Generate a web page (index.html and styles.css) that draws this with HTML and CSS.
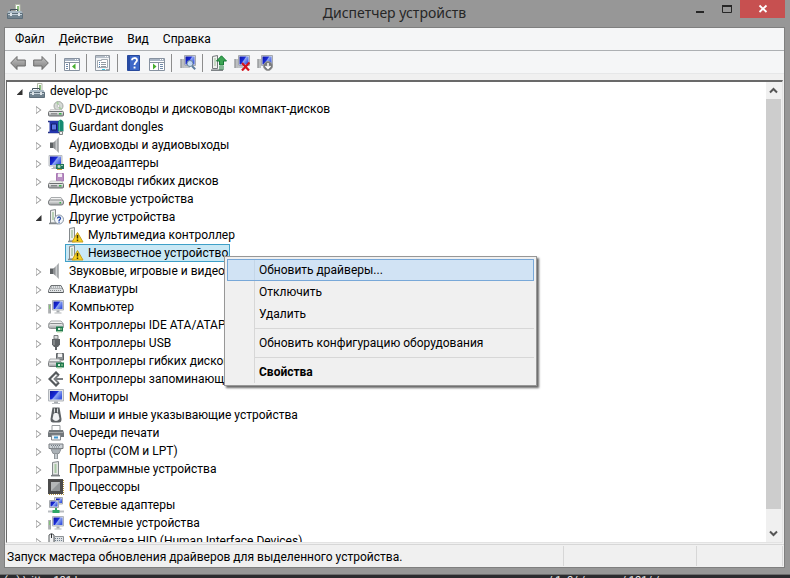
FILE: index.html
```html
<!DOCTYPE html>
<html lang="ru">
  <head>
    <meta charset="UTF-8" />
    <meta name="viewport" content="width=device-width, initial-scale=1.0" />
    <title>Диспетчер устройств</title>
    <link rel="stylesheet" href="styles.css">
  </head>
  <body>
    <!-- Набор иконок -->
    <svg class="sprite" aria-hidden="true">
      <defs>
        <linearGradient id="screen" x1="0" y1="0" x2="1" y2="0.6">
          <stop offset="0" stop-color="#0a12a0" />
          <stop offset="0.5" stop-color="#1a2bd8" />
          <stop offset="0.6" stop-color="#8fa6f2" />
          <stop offset="1" stop-color="#3c58e0" />
        </linearGradient>
        <linearGradient id="metal" x1="0" y1="0" x2="0" y2="1">
          <stop offset="0" stop-color="#f4f4f4" />
          <stop offset="1" stop-color="#9a9d9f" />
        </linearGradient>
        <linearGradient id="side" x1="0" y1="0" x2="1" y2="0">
          <stop offset="0" stop-color="#6f7275" />
          <stop offset="0.6" stop-color="#c9ccce" />
          <stop offset="1" stop-color="#808386" />
        </linearGradient>
        <linearGradient id="arrow" x1="0" y1="0" x2="0" y2="1">
          <stop offset="0" stop-color="#c4c4c4" />
          <stop offset="1" stop-color="#7e7e7e" />
        </linearGradient>
      </defs>

      <symbol id="i-back" viewBox="0 0 16 16">
        <path d="M0.7 8L7 1.5v3.5h8.3v6H7v3.5z" fill="url(#arrow)" stroke="#6b6b6b" />
      </symbol>
      <symbol id="i-forward" viewBox="0 0 16 16">
        <path d="M15.3 8L9 1.5v3.5H0.7v6H9v3.5z" fill="url(#arrow)" stroke="#6b6b6b" />
      </symbol>
      <symbol id="i-tree" viewBox="0 0 16 16">
        <path d="M0.5 3.5h15v12H0.5z" fill="#fff" stroke="#8792a0" />
        <path d="M1 4h14v2H1z" fill="#a9b5c4" />
        <path d="M11 4.5h1M13 4.5h1" stroke="#fff" />
        <path d="M0 7.5h16M5.5 8v7" stroke="#8792a0" />
        <path d="M2 9.5h2M2 11.5h2M2 13.5h2" stroke="#6d88a8" />
        <path d="M11.5 8.5v6L8 11.5z" fill="#45ad2c" />
      </symbol>
      <symbol id="i-props" viewBox="0 0 16 16">
        <path d="M0.5 0.5h14v15H0.5z" fill="#f4f6f8" stroke="#929aa3" />
        <path d="M1 1h13v2H1z" fill="#b7c0ca" />
        <path d="M10 1.5h1M12 1.5h1" stroke="#fff" />
        <path d="M2.5 5.5h4v-1h6v8h-10z" fill="#fff" stroke="#a4abb2" />
        <path d="M4 7.5h1M4 9.5h1M4 11.5h1" stroke="#4f7fb0" />
        <path d="M6 7.5h5M6 9.5h5M6 11.5h5" stroke="#939aa1" />
        <path d="M7 14.5h3" stroke="#2cc4e0" />
        <path d="M11 14.5h3" stroke="#a4abb2" />
      </symbol>
      <symbol id="i-help" viewBox="0 0 16 16">
        <path d="M1.5 0.5h12v15h-12z" fill="#3d68c8" stroke="#284a9c" />
        <path d="M2 1h2v14H2z" fill="#264ba6" />
        <path d="M6 5.2C6 2.4 11 2.2 11 5.2C11 7.2 8.5 7.3 8.5 10" fill="none" stroke="#fff" stroke-width="1.8" />
        <path d="M7.6 11.6h1.9v1.9H7.6z" fill="#fff" />
      </symbol>
      <symbol id="i-pane" viewBox="0 0 16 16">
        <path d="M0.5 3.5h15v12H0.5z" fill="#fff" stroke="#8792a0" />
        <path d="M1 4h14v2H1z" fill="#a9b5c4" />
        <path d="M11 4.5h1M13 4.5h1" stroke="#fff" />
        <path d="M0 7.5h16M9.5 8v7" stroke="#8792a0" />
        <path d="M11 9.5h3M11 11.5h3M11 13.5h3" stroke="#6d88a8" />
        <path d="M4 8.5v6L7.5 11.5z" fill="#45ad2c" />
      </symbol>

      <!-- Компьютер с системным блоком, общий для нескольких иконок -->
      <symbol id="i-computer" viewBox="0 0 16 16">
        <path d="M4.5 1.5h11v9.5h-11z" fill="#e1e3e6" stroke="#b1b5ba" />
        <path d="M5.5 2.5h9v7.5h-9z" fill="url(#screen)" />
        <path d="M8.5 11.5h3v2h-3z" fill="#a7abaf" />
        <path d="M6.5 13.5h7v1h-7z" fill="#b3b6b9" />
        <path d="M0.5 5h2.5v9.5h-2.5z" fill="url(#side)" />
        <path d="M1 6h1v4H1z" fill="#84c07b" />
      </symbol>
      <symbol id="i-scan" viewBox="0 0 16 16">
        <path d="M4.5 0.5h11v10h-11z" fill="#dcdfe3" stroke="#a5a9ae" />
        <path d="M5.5 1.5h9v8h-9z" fill="url(#screen)" />
        <path d="M0.5 4h3v9h-3z" fill="url(#side)" />
        <path d="M4 11h6v2H4z" fill="#c0c3c7" />
        <circle cx="10" cy="8.5" r="3" fill="#cfe6f8" fill-opacity="0.85" stroke="#68849c" />
        <path d="M12 11l3.2 3.2" stroke="#5f7f9e" stroke-width="2" />
      </symbol>
      <symbol id="i-update" viewBox="0 0 16 16">
        <path d="M1.5 1.5l5-1v13h-5z" fill="#eef0ee" stroke="#74797c" />
        <path d="M3 3h2v8H3z" fill="#c5d8c3" />
        <path d="M0 15.2h12" stroke="#7e8386" stroke-width="1.6" />
        <path d="M10.5 0.8L15.5 6h-3v4h-4V6H5.5z" fill="#3ba553" stroke="#167a35" />
        <path d="M8 12h5M8 14h5" stroke="#167a35" />
      </symbol>
      <symbol id="i-remove" viewBox="0 0 16 16">
        <path d="M4.5 0.5h11v10h-11z" fill="#dcdfe3" stroke="#a5a9ae" />
        <path d="M5.5 1.5h9v8h-9z" fill="url(#screen)" />
        <path d="M0.5 4h3v9h-3z" fill="url(#side)" />
        <path d="M4 11h5v2H4z" fill="#c0c3c7" />
        <path d="M8 8l7 7.5M15.5 7.5l-7.5 8" stroke="#d3141c" stroke-width="2.2" />
      </symbol>
      <symbol id="i-disable" viewBox="0 0 16 16">
        <path d="M4.5 0.5h11v10h-11z" fill="#dcdfe3" stroke="#a5a9ae" />
        <path d="M5.5 1.5h9v8h-9z" fill="url(#screen)" />
        <path d="M0.5 4h3v9h-3z" fill="url(#side)" />
        <circle cx="11" cy="11" r="4.5" fill="#77797b" stroke="#999" />
        <path d="M11 8v5M8.5 11l2.5 2.5 2.5-2.5" fill="none" stroke="#fff" stroke-width="1.5" />
      </symbol>

      <symbol id="i-root" viewBox="0 0 16 16">
        <path d="M8.5 0.5h4.5v7H8.5z" fill="#fff" stroke="#b2b8a8" />
        <path d="M10 2h2v5h-2z" fill="#8bbf7c" />
        <path d="M3.5 8V5.5h7V8" fill="none" stroke="#44525c" />
        <path d="M1.5 7h13l1.5 3H0z" fill="#a9b9c4" />
        <path d="M0.5 9.5h15v5h-15z" fill="#71838f" stroke="#5d6e7a" />
        <path d="M1 10.5h14" stroke="#c2cfd8" />
        <path d="M3 9h2v3H3zM11 9h2v3h-2z" fill="#dce3e7" />
      </symbol>
      <symbol id="i-dvd" viewBox="0 0 16 16">
        <circle cx="10.5" cy="5" r="4.5" fill="#d6dad6" stroke="#a2a6a2" />
        <path d="M10.5 5L8 1.5 10.5 0.8zM10.5 5l3.5 2.5-2.5 1.8z" fill="#a6cf9e" />
        <circle cx="10.5" cy="5" r="1.3" fill="#fff" stroke="#999" stroke-width="0.5" />
        <path d="M2.5 8.5h11l2 3H0.5z" fill="#ececec" stroke="#aaa" stroke-width="0.5" />
        <rect x="0.5" y="10.5" width="15" height="4.5" rx="1" fill="url(#metal)" stroke="#6c6f71" />
        <path d="M11 12h2.5v1.5H11z" fill="#39b54a" />
        <path d="M3 12.8h6" stroke="#77797b" />
      </symbol>
      <symbol id="i-dongle" viewBox="0 0 16 16">
        <path d="M0 2.5h11M0 13.5h11" stroke="#25307e" stroke-width="1.5" />
        <path d="M1.5 2h9v12h-9z" fill="#2436ad" />
        <path d="M3.5 5h5v6h-5z" fill="#5e78e4" stroke="#121c66" />
        <path d="M10 3q2.5-5 5.5 0v9.5H10z" fill="#168a72" />
        <path d="M11.5 2v10" stroke="#49b89e" />
        <path d="M11.5 12.5h3v3h-3z" fill="#eee" stroke="#818585" />
      </symbol>
      <symbol id="i-audio" viewBox="0 0 16 16">
        <path d="M2 5.5h3.5v5.5H2z" fill="#5d6164" />
        <path d="M5.5 5.5L10.5 0.5v15L5.5 11z" fill="url(#side)" />
        <path d="M10.5 0.5v15" stroke="#b3b6b8" />
      </symbol>
      <symbol id="i-video" viewBox="0 0 16 16">
        <path d="M1 0.5h13v10.5H1z" fill="#e1e3e6" stroke="#b7bbc0" />
        <path d="M2 1.5h11v8.5H2z" fill="url(#screen)" />
        <path d="M5 11.5h4v1.5H5zM3.5 13h5v1h-5z" fill="#b2b6ba" />
        <path d="M8 9h8v5H8z" fill="#20745a" />
        <path d="M10 10.5h2v2h-2zM13 10.5h2" fill="#ddebd9" stroke="#9fcfaf" />
        <path d="M9 14.5h5" stroke="#c8a33c" />
      </symbol>
      <symbol id="i-floppy" viewBox="0 0 16 16">
        <path d="M8.5 0.5h7V8h-7z" fill="#b98fc4" stroke="#a978b4" />
        <path d="M10 0.5h4V4h-4z" fill="#f3edf5" />
        <path d="M2.5 8h11l2 3H0.5z" fill="#ececec" stroke="#aaa" stroke-width="0.5" />
        <rect x="0.5" y="10.5" width="15" height="4.5" rx="1" fill="url(#metal)" stroke="#6c6f71" />
        <path d="M11 12h2.5v1.5H11z" fill="#39b54a" />
        <path d="M3 12.8h6" stroke="#66696b" />
      </symbol>
      <symbol id="i-disk" viewBox="0 0 16 16">
        <path d="M3 6.5h10l2.5 4H0.5z" fill="#f3f3f3" stroke="#a8abad" />
        <rect x="0.5" y="9" width="15" height="5" rx="2" fill="url(#metal)" stroke="#7b7e80" />
        <path d="M11.5 11h1.5v1.5h-1.5z" fill="#39b54a" />
      </symbol>
      <symbol id="i-other" viewBox="0 0 16 16">
        <path d="M2.5 1.5l5-1V14h-5z" fill="#eef0ee" stroke="#84898c" />
        <path d="M4 3h2v8H4z" fill="#b9d1b5" />
        <path d="M1 14.5h9" stroke="#84898c" stroke-width="1.5" />
        <circle cx="11" cy="10.5" r="4.5" fill="#f4f7fb" stroke="#8794a3" />
        <path d="M9.5 9.5c0-2 3-2 3 0C12.5 10.5 11 10.7 11 12" fill="none" stroke="#2449a8" stroke-width="1.3" />
        <path d="M10.4 12.5h1.3v1.3h-1.3z" fill="#2449a8" />
      </symbol>
      <symbol id="i-unknown" viewBox="0 0 16 16">
        <path d="M1.5 1.5l5-1V14h-5z" fill="#eef0ee" stroke="#84898c" />
        <path d="M3 3h2v8H3z" fill="#b9d1b5" />
        <path d="M0 14.5h7" stroke="#84898c" stroke-width="1.5" />
        <path d="M9.5 5.5L15 15H4z" fill="#f7d21e" stroke="#c59e1c" stroke-linejoin="round" />
        <path d="M9.5 8v3.5M9.5 12.5v1.5" stroke="#3b3000" stroke-width="1.5" />
      </symbol>
      <symbol id="i-keyboard" viewBox="0 0 16 16">
        <path d="M3 4.5h10l2.5 5v2h-15v-2z" fill="#dfe2e4" stroke="#6f7376" stroke-linejoin="round" />
        <path d="M3 6h10M2.5 7.5h11M2 9.5h12" stroke="#85898c" stroke-dasharray="1 1" />
        <path d="M1 11.5h14" stroke="#54585b" />
      </symbol>
      <symbol id="i-ide" viewBox="0 0 16 16">
        <path d="M3 4h10l2.5 3H0.5z" fill="#f3f3f3" stroke="#a8abad" />
        <rect x="0.5" y="6.5" width="15" height="5" rx="2" fill="url(#metal)" stroke="#8b8e90" />
        <path d="M8 9.5h7v5H8z" fill="#1f7a4d" />
        <path d="M10 11h2v2h-2z" fill="#d9efdf" />
        <path d="M13 11v2M9 15h5" stroke="#b7d7a8" />
      </symbol>
      <symbol id="i-usb" viewBox="0 0 16 16">
        <path d="M6 0.5h4V4H6z" fill="#d9dbdc" stroke="#7b7e80" />
        <path d="M4 4h8v5.5L10 12H6L4 9.5z" fill="#606467" />
        <path d="M6 5v5" stroke="#a7abad" />
        <path d="M8 12v3" stroke="#606467" stroke-width="2" />
      </symbol>
      <symbol id="i-fdc" viewBox="0 0 16 16">
        <path d="M8.5 0.5h7V7h-7z" fill="#8e9295" stroke="#606467" />
        <path d="M10 0.5h4V4h-4z" fill="#f4f4f4" />
        <path d="M2 6h9l2 3H0.5z" fill="#f0f0f0" stroke="#a8abad" />
        <rect x="0.5" y="9" width="13" height="4.5" rx="1" fill="url(#metal)" stroke="#7b7e80" />
        <path d="M8 9.5h8v5H8z" fill="#1f7a4d" />
        <path d="M10 11h2v2h-2z" fill="#d9efdf" />
        <path d="M14 11v2M9 15h5" stroke="#b7d7a8" />
      </symbol>
      <symbol id="i-storage" viewBox="0 0 16 16">
        <path d="M11 4.5L8 1.5 1.5 8 8 14.5l3-3" fill="none" stroke="#55595c" stroke-width="2.2" />
        <path d="M6.5 8H15M10 4.5L6.5 8l3.5 3.5" fill="none" stroke="#7c8083" stroke-width="1.8" />
      </symbol>
      <symbol id="i-monitor" viewBox="0 0 16 16">
        <path d="M0.5 0.5h15v11.5h-15z" fill="#e1e3e6" stroke="#b1b5ba" />
        <path d="M2 2h12v8.5H2z" fill="url(#screen)" />
        <path d="M6 12.5h4v1.5H6z" fill="#a7abaf" />
        <path d="M4 14.5h8" stroke="#bcc0c4" />
      </symbol>
      <symbol id="i-mouse" viewBox="0 0 16 16">
        <path d="M4.5 0.5h7L13.5 12Q13.5 15.5 11 15.5H5Q2.5 15.5 2.5 12z" fill="#5d6164" />
        <path d="M5.5 7Q8 4 10.5 7L11.5 12Q8 16 4.5 12z" fill="#f1f2f3" />
        <path d="M6 1.5h4v4H6z" fill="#d7dadc" />
        <path d="M8 1v5" stroke="#2c2f31" stroke-width="1.5" />
      </symbol>
      <symbol id="i-printer" viewBox="0 0 16 16">
        <path d="M4 0.5h8V6H4z" fill="#fff" stroke="#989c9f" />
        <path d="M1 5h14l1 3v4H0V8z" fill="#72777b" />
        <path d="M1 7.5h14" stroke="#a5a8aa" />
        <path d="M3.5 10h9v5h-9z" fill="#f5f8fb" stroke="#85898c" />
        <path d="M6 12.5h4" stroke="#3f96cf" stroke-width="2" />
      </symbol>
      <symbol id="i-port" viewBox="0 0 16 16">
        <path d="M1 1h14v4.5H1z" fill="#cdd2d6" stroke="#787d81" />
        <path d="M3 2.5h10M4 4h8" stroke="#737c84" stroke-dasharray="1 1" />
        <path d="M3 6h10l-2 4.5H5z" fill="#aab1b6" stroke="#8b9094" />
        <path d="M6.5 10.5h3V16h-3z" fill="#c8cdd1" stroke="#90969a" />
      </symbol>
      <symbol id="i-soft" viewBox="0 0 16 16">
        <path d="M4.5 1.5l6-1V14h-6z" fill="#e3e6e3" stroke="#84898c" />
        <path d="M6.5 3h2v9h-2z" fill="#a9c9a5" />
        <path d="M3 14.7h9" stroke="#7b8083" stroke-width="1.5" />
      </symbol>
      <symbol id="i-cpu" viewBox="0 0 16 16">
        <path d="M1 15.5h15M15.5 1v15" stroke="#b39545" stroke-dasharray="1 1" />
        <path d="M0 0h15v15H0z" fill="#4b4b4b" />
        <path d="M3 3h9v9H3z" fill="#b4b7b8" />
        <path d="M3 12l9-9v9z" fill="#929698" />
      </symbol>
      <symbol id="i-net" viewBox="0 0 16 16">
        <path d="M6.5 0.5h8v6.5h-8z" fill="#dcdfe3" stroke="#a5a9ae" />
        <path d="M8 1.5h6v4.5H8z" fill="url(#screen)" />
        <path d="M1.5 3.5h9v7h-9z" fill="#dcdfe3" stroke="#a5a9ae" />
        <path d="M2.5 4.5h7v5h-7z" fill="url(#screen)" />
        <path d="M7 11h2v3H7z" fill="#3aa66c" />
        <path d="M0 14.5h16" stroke="#b8bcc0" stroke-width="2" />
        <path d="M4.5 14.5h7" stroke="#2fa866" stroke-width="3" />
      </symbol>
      <symbol id="i-hid" viewBox="0 0 16 16">
        <path d="M1 2q2.5-3 5 0v9q-2.5 3-5 0z" fill="#f1f2f3" stroke="#54585b" />
        <path d="M3.5 1v4" stroke="#2c2f31" />
        <path d="M6.5 3.5h9v9h-9z" fill="#dfe2e4" stroke="#8d9194" />
        <path d="M7 5.5h8M7 7.5h8" stroke="#717f8d" stroke-dasharray="1 1" />
      </symbol>
    </svg>

    <div class="window">
      <header class="titlebar">
        <svg class="icon"><use href="#i-root" /></svg>
        <h1 class="title">Диспетчер устройств</h1>
        <div class="controls">
          <button class="control" aria-label="Свернуть">
            <svg width="10" height="10"><path d="M1 8h8" stroke="#262626" stroke-width="2" /></svg>
          </button>
          <button class="control" aria-label="Развернуть">
            <svg width="10" height="10"><path d="M0.5 1v7.5h9V1" fill="none" stroke="#262626" /><path d="M0 2h10" stroke="#262626" stroke-width="2" /></svg>
          </button>
          <button class="control close" aria-label="Закрыть">
            <svg width="10" height="10"><path d="M1.5 1.5l7 6.5M8.5 1.5l-7 6.5" stroke="#fff" stroke-width="1.8" /></svg>
          </button>
        </div>
      </header>

      <main class="client">
        <nav class="menubar">
          <button class="menu">Файл</button>
          <button class="menu">Действие</button>
          <button class="menu">Вид</button>
          <button class="menu">Справка</button>
        </nav>

        <div class="toolbar">
          <button class="tool" aria-label="Назад"><svg class="icon"><use href="#i-back" /></svg></button>
          <button class="tool" aria-label="Вперёд"><svg class="icon"><use href="#i-forward" /></svg></button>
          <span class="divider"></span>
          <button class="tool" aria-label="Дерево консоли"><svg class="icon"><use href="#i-tree" /></svg></button>
          <span class="divider"></span>
          <button class="tool" aria-label="Свойства"><svg class="icon"><use href="#i-props" /></svg></button>
          <span class="divider"></span>
          <button class="tool" aria-label="Справка"><svg class="icon"><use href="#i-help" /></svg></button>
          <button class="tool" aria-label="Панель действий"><svg class="icon"><use href="#i-pane" /></svg></button>
          <span class="divider"></span>
          <button class="tool" aria-label="Обновить конфигурацию"><svg class="icon"><use href="#i-scan" /></svg></button>
          <span class="divider"></span>
          <button class="tool" aria-label="Обновить драйверы"><svg class="icon"><use href="#i-update" /></svg></button>
          <button class="tool" aria-label="Удалить"><svg class="icon"><use href="#i-remove" /></svg></button>
          <button class="tool" aria-label="Отключить"><svg class="icon"><use href="#i-disable" /></svg></button>
        </div>

        <div class="view">
          <ul class="tree">
            <li>
              <div class="row"><button class="twisty open" aria-label="Свернуть"></button><svg class="icon"><use href="#i-root" /></svg><span class="name">develop-pc</span></div>
              <ul class="branch">
                <li class="row"><button class="twisty" aria-label="Развернуть"></button><svg class="icon"><use href="#i-dvd" /></svg><span class="name">DVD-дисководы и дисководы компакт-дисков</span></li>
                <li class="row"><button class="twisty" aria-label="Развернуть"></button><svg class="icon"><use href="#i-dongle" /></svg><span class="name">Guardant dongles</span></li>
                <li class="row"><button class="twisty" aria-label="Развернуть"></button><svg class="icon"><use href="#i-audio" /></svg><span class="name">Аудиовходы и аудиовыходы</span></li>
                <li class="row"><button class="twisty" aria-label="Развернуть"></button><svg class="icon"><use href="#i-video" /></svg><span class="name">Видеоадаптеры</span></li>
                <li class="row"><button class="twisty" aria-label="Развернуть"></button><svg class="icon"><use href="#i-floppy" /></svg><span class="name">Дисководы гибких дисков</span></li>
                <li class="row"><button class="twisty" aria-label="Развернуть"></button><svg class="icon"><use href="#i-disk" /></svg><span class="name">Дисковые устройства</span></li>
                <li>
                  <div class="row"><button class="twisty open" aria-label="Свернуть"></button><svg class="icon"><use href="#i-other" /></svg><span class="name">Другие устройства</span></div>
                  <ul class="branch devices">
                    <li class="row"><svg class="icon"><use href="#i-unknown" /></svg><span class="name">Мультимедиа контроллер</span></li>
                    <li class="row selected">
                      <svg class="icon"><use href="#i-unknown" /></svg><span class="name">Неизвестное устройство</span>
                      <!-- Контекстное меню выбранного устройства -->
                      <div class="context" role="menu">
                        <button class="command active" role="menuitem">Обновить драйверы...</button>
                        <button class="command" role="menuitem">Отключить</button>
                        <button class="command" role="menuitem">Удалить</button>
                        <hr class="line">
                        <button class="command" role="menuitem">Обновить конфигурацию оборудования</button>
                        <hr class="line">
                        <button class="command default" role="menuitem">Свойства</button>
                      </div>
                    </li>
                  </ul>
                </li>
                <li class="row"><button class="twisty" aria-label="Развернуть"></button><svg class="icon"><use href="#i-audio" /></svg><span class="name">Звуковые, игровые и видеоустройства</span></li>
                <li class="row"><button class="twisty" aria-label="Развернуть"></button><svg class="icon"><use href="#i-keyboard" /></svg><span class="name">Клавиатуры</span></li>
                <li class="row"><button class="twisty" aria-label="Развернуть"></button><svg class="icon"><use href="#i-computer" /></svg><span class="name">Компьютер</span></li>
                <li class="row"><button class="twisty" aria-label="Развернуть"></button><svg class="icon"><use href="#i-ide" /></svg><span class="name">Контроллеры IDE ATA/ATAPI</span></li>
                <li class="row"><button class="twisty" aria-label="Развернуть"></button><svg class="icon"><use href="#i-usb" /></svg><span class="name">Контроллеры USB</span></li>
                <li class="row"><button class="twisty" aria-label="Развернуть"></button><svg class="icon"><use href="#i-fdc" /></svg><span class="name">Контроллеры гибких дисков</span></li>
                <li class="row"><button class="twisty" aria-label="Развернуть"></button><svg class="icon"><use href="#i-storage" /></svg><span class="name">Контроллеры запоминающих устройств</span></li>
                <li class="row"><button class="twisty" aria-label="Развернуть"></button><svg class="icon"><use href="#i-monitor" /></svg><span class="name">Мониторы</span></li>
                <li class="row"><button class="twisty" aria-label="Развернуть"></button><svg class="icon"><use href="#i-mouse" /></svg><span class="name">Мыши и иные указывающие устройства</span></li>
                <li class="row"><button class="twisty" aria-label="Развернуть"></button><svg class="icon"><use href="#i-printer" /></svg><span class="name">Очереди печати</span></li>
                <li class="row"><button class="twisty" aria-label="Развернуть"></button><svg class="icon"><use href="#i-port" /></svg><span class="name">Порты (COM и LPT)</span></li>
                <li class="row"><button class="twisty" aria-label="Развернуть"></button><svg class="icon"><use href="#i-soft" /></svg><span class="name">Программные устройства</span></li>
                <li class="row"><button class="twisty" aria-label="Развернуть"></button><svg class="icon"><use href="#i-cpu" /></svg><span class="name">Процессоры</span></li>
                <li class="row"><button class="twisty" aria-label="Развернуть"></button><svg class="icon"><use href="#i-net" /></svg><span class="name">Сетевые адаптеры</span></li>
                <li class="row"><button class="twisty" aria-label="Развернуть"></button><svg class="icon"><use href="#i-computer" /></svg><span class="name">Системные устройства</span></li>
                <li class="row"><button class="twisty" aria-label="Развернуть"></button><svg class="icon"><use href="#i-hid" /></svg><span class="name">Устройства HID (Human Interface Devices)</span></li>
              </ul>
            </li>
          </ul>
          <div class="scrollbar">
            <button class="scroll" aria-label="Вверх"><svg width="9" height="9"><path d="M1 6.5L4.5 3 8 6.5" fill="none" stroke="#555" stroke-width="2" /></svg></button>
            <div class="thumb"></div>
            <div class="track"></div>
            <button class="scroll" aria-label="Вниз"><svg width="9" height="9"><path d="M1 2.5L4.5 6 8 2.5" fill="none" stroke="#555" stroke-width="2" /></svg></button>
          </div>
        </div>

        <footer class="status">
          <span class="hint">Запуск мастера обновления драйверов для выделенного устройства.</span>
          <span class="cell wide"></span>
          <span class="cell"></span>
        </footer>
      </main>
    </div>
    <!-- Край окна, которое лежит под диспетчером -->
    <div class="behind">
      <span>(...) \ritter 101 b</span>
      <span>стр / 1&lt;0/ / с &nbsp; стр / 101/ / с</span>
    </div>
  </body>
</html>
```
FILE: styles.css
```css
* {
  box-sizing: border-box;
}

body {
  margin: 0;
  display: flex;
  flex-direction: column;
  height: 100vh;
  overflow: hidden;
  background: #2b2b2e;
  color: #000;
  font-family: Roboto, "Noto Sans", sans-serif;
  font-size: 12px;
}

button {
  margin: 0;
  padding: 0;
  border: 0;
  background: none;
  color: inherit;
  font: inherit;
}

ul {
  margin: 0;
  padding: 0;
  list-style: none;
}

.sprite {
  position: absolute;
  width: 0;
  height: 0;
}

.icon {
  flex: none;
  width: 16px;
  height: 16px;
}

/* Окно */
.window {
  flex: 1;
  min-height: 0;
  display: flex;
  flex-direction: column;
  padding: 0 5px 6px 4px;
  background: #979797;
  border-bottom: 1px solid #6e6e6e;
}

.titlebar {
  display: grid;
  grid-template-columns: 1fr auto 1fr;
  align-items: start;
  height: 27px;
}

.titlebar .icon {
  margin: 4px 0 0 3px;
}

.title {
  margin: 0;
  color: #262626;
  font-family: "Noto Sans", "Open Sans", sans-serif;
  font-size: 14px;
  font-weight: normal;
  line-height: 26px;
}

.controls {
  display: flex;
  justify-content: flex-end;
}

.control {
  display: flex;
  justify-content: center;
  align-items: center;
  width: 27px;
  height: 18px;
}

.control.close {
  width: 45px;
  background: #c75050;
}

.client {
  flex: 1;
  min-height: 0;
  display: flex;
  flex-direction: column;
  border: 1px solid #7f7f7f;
  background: #f0f0f0;
}

/* Меню и панель инструментов */
.menubar {
  display: flex;
  gap: 14px;
  height: 23px;
  padding-left: 10px;
  background: #f5f6f7;
  border-bottom: 1px solid #adb0b3;
}

.toolbar {
  display: flex;
  align-items: center;
  height: 23px;
  padding: 1px 0 0 1px;
  background: #f5f6f7;
  border-bottom: 1px solid #e6e7e8;
}

.tool {
  display: flex;
  justify-content: center;
  align-items: center;
  width: 23px;
  height: 22px;
}

.divider {
  width: 1px;
  height: 18px;
  margin: 0 4px 0 3px;
  background: #8d8d8d;
}

/* Дерево устройств */
.view {
  flex: 1;
  min-height: 0;
  display: flex;
  margin: 6px 1px 1px;
  border: 1px solid #e3e3e3;
  border-top: 2px solid #696969;
  border-left: 1px solid #696969;
  background: #fff;
}

.tree {
  flex: 1;
  overflow: hidden;
  padding-left: 6px;
}

.branch {
  padding-left: 19px;
}

.branch.devices {
  padding-left: 36px;
}

.row {
  display: flex;
  align-items: center;
  height: 18px;
  white-space: nowrap;
}

.name {
  padding: 0 3px 0 5px;
  line-height: 16px;
}

.devices .name {
  padding: 0 1px 0 4px;
}

.twisty {
  display: flex;
  justify-content: center;
  align-items: center;
  width: 16px;
  height: 18px;
  padding: 2px 3px 0 0;
}

.twisty::before {
  content: "";
  width: 6px;
  height: 9px;
  background: #9a9a9a;
  clip-path: polygon(0 0, 100% 50%, 0 100%, 0 10%, 1px 20%, 1px 80%, 75% 50%, 0 10%);
}

.twisty.open::before {
  width: 6px;
  height: 6px;
  background: #333;
  clip-path: polygon(100% 0, 100% 100%, 0 100%);
}

.selected {
  position: relative;
  width: fit-content;
  margin-left: -3px;
  padding-left: 2px;
  border: 1px solid #3fa0c8;
  background: #c9e8f5;
}

/* Контекстное меню */
.context {
  position: absolute;
  z-index: 1;
  top: 11px;
  left: 158px;
  width: 313px;
  padding: 2px;
  border: 1px solid #979797;
  background: linear-gradient(#d7d7d7, #d7d7d7) 29px 2px / 1px calc(100% - 4px) no-repeat #f0f0f0;
  box-shadow: 2px 2px 2px rgba(0, 0, 0, 0.6);
}

.command {
  display: block;
  width: 100%;
  height: 22px;
  padding-left: 31px;
  border: 1px solid transparent;
  text-align: left;
}

.command.active {
  border-color: #78a8d8;
  background: rgba(178, 214, 247, 0.5);
}

.command.default {
  font-weight: bold;
}

.line {
  margin: 3px 0 3px 28px;
  border: 0;
  border-top: 1px solid #d7d7d7;
}

/* Полоса прокрутки */
.scrollbar {
  display: flex;
  flex-direction: column;
  width: 16px;
  padding-right: 1px;
  background: #f0f0f0;
}

.scroll {
  display: flex;
  justify-content: center;
  align-items: center;
  height: 17px;
}

.thumb {
  flex: 25;
  background: #cdcdcd;
}

.track {
  flex: 1;
}

/* Строка состояния */
.status {
  display: flex;
  height: 23px;
  padding: 1px 1px 1px 2px;
  border-top: 1px solid #d7d7d7;
  line-height: 22px;
}

.hint {
  flex: 1;
}

.cell {
  width: 87px;
  border-left: 1px solid #d7d7d7;
  border-right: 1px solid #d7d7d7;
}

.cell.wide {
  width: 133px;
  border-right: 0;
}

.behind {
  display: grid;
  grid-template-columns: 2fr 1fr;
  height: 3px;
  padding-left: 4px;
  overflow: hidden;
  background: #2b2b2e;
  color: #eee;
  font-size: 11px;
  line-height: 12px;
}
```
